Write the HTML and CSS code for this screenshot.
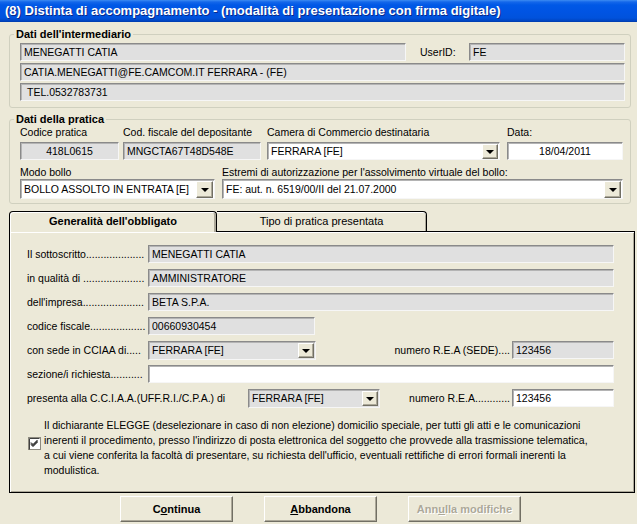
FILE: index.html
```html
<!DOCTYPE html>
<html lang="it">
<head>
<meta charset="utf-8">
<title>Distinta di accompagnamento</title>
<link rel="stylesheet" href="styles.css">
</head>
<body>
<div class="window">
  <div class="titlebar">(8) Distinta di accompagnamento - (modalità di presentazione con firma digitale)</div>
  <div class="content">
    <fieldset class="group g1">
      <legend>Dati dell'intermediario</legend>
      <div class="row">
        <div class="field grey w-name">MENEGATTI CATIA</div>
        <span class="userid">UserID:</span>
        <div class="field grey w-uid">FE</div>
      </div>
      <div class="field grey">CATIA.MENEGATTI@FE.CAMCOM.IT FERRARA - (FE)</div>
      <div class="field grey indent">TEL.0532783731</div>
    </fieldset>

    <fieldset class="group g2">
      <legend>Dati della pratica</legend>
      <div class="cells">
        <div class="cell c-cod">
          <span class="lbl">Codice pratica</span>
          <div class="field grey center">418L0615</div>
        </div>
        <div class="cell c-cf">
          <span class="lbl">Cod. fiscale del depositante</span>
          <div class="field grey">MNGCTA67T48D548E</div>
        </div>
        <div class="cell c-cam">
          <span class="lbl">Camera di Commercio destinataria</span>
          <div class="field combo white"><span class="val">FERRARA [FE]</span><span class="dd"><i></i></span></div>
        </div>
        <div class="cell c-data">
          <span class="lbl">Data:</span>
          <div class="field white center">18/04/2011</div>
        </div>
      </div>
      <div class="cells second">
        <div class="cell c-bollo">
          <span class="lbl">Modo bollo</span>
          <div class="field combo tall white"><span class="val">BOLLO ASSOLTO IN ENTRATA [E]</span><span class="dd"><i></i></span></div>
        </div>
        <div class="cell c-estr">
          <span class="lbl">Estremi di autorizzazione per l'assolvimento virtuale del bollo:</span>
          <div class="field combo tall white"><span class="val">FE: aut. n. 6519/00/II del 21.07.2000</span><span class="dd"><i></i></span></div>
        </div>
      </div>
    </fieldset>

    <div class="tabs">
      <div class="tab active">Generalità dell'obbligato</div>
      <div class="tab">Tipo di pratica presentata</div>
    </div>
    <div class="panel">
      <div class="prow">
        <span class="plabel">Il sottoscritto....................</span>
        <div class="field grey fill">MENEGATTI CATIA</div>
      </div>
      <div class="prow">
        <span class="plabel">in qualità di .....................</span>
        <div class="field grey fill">AMMINISTRATORE</div>
      </div>
      <div class="prow">
        <span class="plabel">dell'impresa.....................</span>
        <div class="field grey fill">BETA S.P.A.</div>
      </div>
      <div class="prow">
        <span class="plabel">codice fiscale...................</span>
        <div class="field grey w-cf">00660930454</div>
      </div>
      <div class="prow">
        <span class="plabel">con sede in CCIAA di.....</span>
        <div class="field combo grey w-sede"><span class="val">FERRARA [FE]</span><span class="dd"><i></i></span></div>
        <span class="rlabel">numero R.E.A (SEDE)....</span>
        <div class="field grey w-rea">123456</div>
      </div>
      <div class="prow">
        <span class="plabel">sezione/i richiesta...........</span>
        <div class="field white fill"></div>
      </div>
      <div class="prow">
        <span class="plabel wide">presenta alla C.C.I.A.A.(UFF.R.I./C.P.A.) di</span>
        <div class="field combo grey w-pres"><span class="val">FERRARA [FE]</span><span class="dd"><i></i></span></div>
        <span class="rlabel">numero R.E.A............</span>
        <div class="field white w-rea">123456</div>
      </div>
      <div class="check">
        <svg class="cbox" width="13" height="13" viewBox="0 0 13 13" aria-hidden="true">
          <rect x="0.5" y="0.5" width="12" height="12" fill="#fff" stroke="#8d8a7f"/>
          <path d="M1.5 12.5V1.5H11.5" fill="none" stroke="#404040"/>
          <path d="M3 5.5l2 2 4.5-4.5M3 6.5l2 2 4.5-4.5M3 7.5l2 2 4.5-4.5" fill="none" stroke="#000" stroke-width="1"/>
        </svg>
        <p class="ptext">Il dichiarante ELEGGE (deselezionare in caso di non elezione) domicilio speciale, per tutti gli atti e le comunicazioni<br>inerenti il procedimento, presso l'indirizzo di posta elettronica del soggetto che provvede alla trasmissione telematica,<br>a cui viene conferita la facoltà di presentare, su richiesta dell'ufficio, eventuali rettifiche di errori formali inerenti la<br>modulistica.</p>
      </div>
    </div>

    <div class="buttons">
      <button class="btn">C<u>o</u>ntinua</button>
      <button class="btn"><u>A</u>bbandona</button>
      <button class="btn disabled">Ann<u>u</u>lla modifiche</button>
    </div>
  </div>
</div>
</body>
</html>
```

FILE: styles.css
```css
html, body {
  margin: 0;
  padding: 0;
}
body {
  font-family: "Liberation Sans", Arial, sans-serif;
  font-size: 10.5px;
  color: #000;
  background: #ECE9D8;
}
.window {
  width: 637px;
  height: 524px;
  background: #ECE9D8;
  overflow: hidden;
}
.titlebar {
  height: 22px;
  line-height: 22px;
  padding-left: 5px;
  color: #fff;
  font-weight: bold;
  font-size: 13px;
  white-space: nowrap;
  text-shadow: 1px 1px 0 #0a2a8a;
  background: linear-gradient(to bottom, #3d8cf2 0, #1467ea 2px, #0058e6 5px, #0054e3 12px, #0052dc 18px, #0044c0 21px, #003aa8 22px);
}
.content {
  padding-left: 9px;
}

/* group boxes */
.group {
  box-sizing: border-box;
  width: 622px;
  margin: 0;
  border: 1px solid #d0d0bf;
  border-radius: 3px;
  padding: 2px 5px 6px 10px;
  min-width: 0;
}
.group legend {
  font-weight: bold;
  font-size: 11px;
  line-height: 13px;
  padding: 0 2px;
  margin-left: -6px;
}
.g1 {
  margin-top: 6px;
}
.g2 {
  margin-top: 5px;
  padding: 0 5px 4px 10px;
}
.row {
  display: flex;
  align-items: center;
}
.g1 .field + .field,
.g1 .row + .field {
  margin-top: 2px;
}
.userid {
  margin-left: 14px;
  width: 49px;
}
.w-name { width: 386px; }
.w-uid { width: 156px; }

/* fields */
.field {
  box-sizing: border-box;
  height: 18px;
  line-height: 16px;
  padding: 0 3px;
  white-space: nowrap;
  overflow: hidden;
  border: 1px solid;
  border-color: #8a8a8a #f6f6f6 #f6f6f6 #8a8a8a;
  box-shadow: inset 1px 1px 0 #b4b4b4;
}
.field.grey { background: #e0e0e0; }
.field.white { background: #fff; }
.field.center { text-align: center; }
.field.indent { padding-left: 6px; }

.combo {
  display: flex;
  align-items: center;
  padding-right: 1px;
}
.combo .val {
  flex: 1;
  overflow: hidden;
}
.combo .dd {
  box-sizing: border-box;
  width: 16px;
  height: 15px;
  flex: none;
  background: #ece9d8;
  border: 1px solid;
  border-color: #fff #716f64 #716f64 #fff;
  box-shadow: inset -1px -1px 0 #aca899;
  display: flex;
  align-items: center;
  justify-content: center;
}
.combo .dd i {
  width: 0;
  height: 0;
  border-left: 4px solid transparent;
  border-right: 4px solid transparent;
  border-top: 4px solid #000;
  margin-top: 1px;
}
.combo.tall {
  height: 20px;
}
.combo.tall .dd {
  width: 17px;
  height: 17px;
}

/* dati pratica grid */
.cells {
  display: flex;
}
.cells.second {
  margin-top: 6px;
}
.cell {
  display: flex;
  flex-direction: column;
}
.cell .lbl {
  line-height: 13px;
  height: 13px;
  margin-bottom: 3px;
  white-space: nowrap;
}
.cells.second .cell .lbl {
  margin-bottom: 0;
}
.c-cod { width: 99px; }
.c-cf { width: 138px; margin-left: 4px; }
.c-cam { width: 233px; margin-left: 6px; }
.c-data { width: 116px; margin-left: 7px; }
.c-bollo { width: 195px; }
.c-estr { width: 401px; margin-left: 7px; }

/* tabs */
.tabs {
  display: flex;
  align-items: flex-end;
  margin-top: 7px;
  height: 20px;
}
.tab {
  box-sizing: border-box;
  height: 20px;
  line-height: 19px;
  text-align: center;
  border: 1px solid #000;
  border-bottom: none;
  background: #ece9d8;
  font-size: 11px;
}
.tab.active {
  width: 208px;
  height: 21px;
  margin-bottom: -1px;
  font-weight: bold;
  border-radius: 4px 4px 0 0;
  position: relative;
  z-index: 1;
  box-shadow: inset 1px 1px 0 #fff, inset -2px 0 0 #aca899;
}
.tab:not(.active) {
  width: 210px;
  border-left: none;
  border-radius: 0 4px 0 0;
  box-shadow: inset 0 1px 0 #fff, inset -1px 0 0 #aca899;
}

/* panel */
.panel {
  box-sizing: border-box;
  width: 626px;
  height: 262px;
  border: 1px solid #000;
  padding: 10px 20px 0 17px;
  box-shadow: inset 1px 1px 0 #fff, inset -1px -1px 0 #aca899;
}
.prow {
  display: flex;
  align-items: center;
  height: 24px;
}
.plabel {
  flex: none;
  width: 121px;
  white-space: nowrap;
}
.plabel.wide {
  width: 221px;
}
.fill { flex: 1; }
.w-cf { width: 167px; }
.w-sede { width: 168px; height: 19px; }
.w-pres { width: 132px; height: 19px; }
.w-rea { width: 102px; }
.rlabel {
  margin-left: auto;
  margin-right: 2px;
  white-space: nowrap;
}

.check {
  display: flex;
  align-items: flex-start;
  margin-top: 8px;
  padding-left: 1px;
}
.cbox {
  flex: none;
  margin-top: 19px;
  margin-right: 3px;
}
.ptext {
  margin: 0;
  line-height: 15px;
  white-space: nowrap;
}

/* buttons */
.buttons {
  display: flex;
  gap: 31px;
  padding-left: 111px;
  margin-top: 3px;
}
.btn {
  box-sizing: border-box;
  width: 113px;
  height: 26px;
  padding: 0;
  margin: 0;
  font-family: inherit;
  font-size: 11px;
  font-weight: bold;
  color: #000;
  background: #ece9d8;
  border: 1px solid;
  border-color: #fff #716f64 #716f64 #fff;
  box-shadow: inset -1px -1px 0 #aca899;
  border-radius: 0;
}
.btn.disabled {
  color: #aca899;
  text-shadow: 1px 1px 0 #fff;
}
```
